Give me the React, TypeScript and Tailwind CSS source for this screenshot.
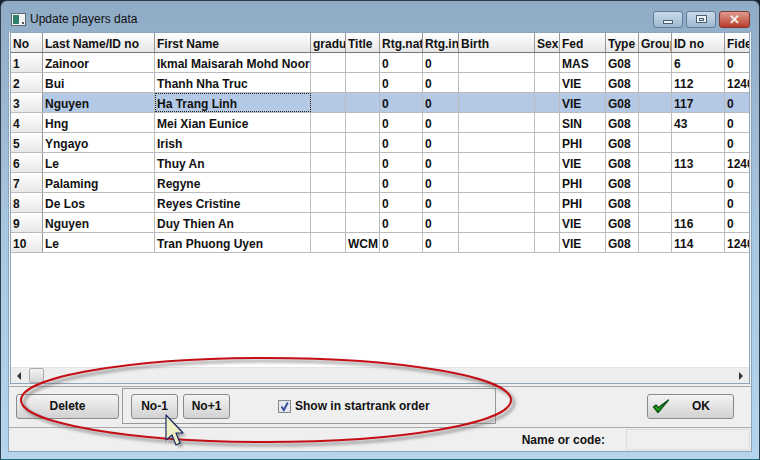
const columns = [
  { label: "No", width: "w-[32px]" },
  { label: "Last Name/ID no", width: "w-[112px]" },
  { label: "First Name", width: "w-[156px]" },
  { label: "gradu", width: "w-[35px]" },
  { label: "Title", width: "w-[34px]" },
  { label: "Rtg.nat", width: "w-[43px]" },
  { label: "Rtg.in", width: "w-[36px]" },
  { label: "Birth", width: "w-[76px]" },
  { label: "Sex", width: "w-[25px]" },
  { label: "Fed", width: "w-[46px]" },
  { label: "Type", width: "w-[33px]" },
  { label: "Group", width: "w-[33px]" },
  { label: "ID no", width: "w-[53px]" },
  { label: "Fide", width: "w-[27px]" },
];

const rows = [
  ["1", "Zainoor", "Ikmal Maisarah Mohd Noor", "", "", "0", "0", "", "", "MAS", "G08", "", "6", "0"],
  ["2", "Bui", "Thanh Nha Truc", "", "", "0", "0", "", "", "VIE", "G08", "", "112", "12401"],
  ["3", "Nguyen", "Ha Trang Linh", "", "", "0", "0", "", "", "VIE", "G08", "", "117", "0"],
  ["4", "Hng", "Mei Xian Eunice", "", "", "0", "0", "", "", "SIN", "G08", "", "43", "0"],
  ["5", "Yngayo", "Irish", "", "", "0", "0", "", "", "PHI", "G08", "", "", "0"],
  ["6", "Le", "Thuy An", "", "", "0", "0", "", "", "VIE", "G08", "", "113", "12401"],
  ["7", "Palaming", "Regyne", "", "", "0", "0", "", "", "PHI", "G08", "", "", "0"],
  ["8", "De Los", "Reyes Cristine", "", "", "0", "0", "", "", "PHI", "G08", "", "", "0"],
  ["9", "Nguyen", "Duy Thien An", "", "", "0", "0", "", "", "VIE", "G08", "", "116", "0"],
  ["10", "Le", "Tran Phuong Uyen", "", "WCM", "0", "0", "", "", "VIE", "G08", "", "114", "12401"],
];

const btn =
  "h-[25px] rounded-[3px] border border-[#8a8a8a] bg-gradient-to-b from-[#f4f4f4] to-[#d2d2d2] text-[12px] font-bold text-[#111]";

const WinButton = ({ width, red, children }: { width: string; red?: boolean; children: React.ReactNode }) => (
  <div
    className={`${width} h-[17px] rounded-[3px] border flex items-center justify-center ${
      red
        ? "border-[#7d3a32] bg-gradient-to-b from-[#dd9a8c] to-[#b8392b]"
        : "border-[#5f7d98] bg-gradient-to-b from-[#c9dbea] to-[#9db9d1]"
    }`}
  >
    {children}
  </div>
);

const App = () => {
  return (
    <div className="relative w-[760px] h-[460px] overflow-hidden bg-[#15202a] font-['Liberation_Sans',sans-serif]">
      <div className="w-full h-full flex flex-col rounded-t-[7px] border-t border-l border-r border-b border-[#2e3e4c] border-b-[#1d6f80] bg-gradient-to-b from-[#8fabc6] via-[#a9c6e0] to-[#b6d4ec] px-[7px]">
        {/* Title bar */}
        <div className="h-[31px] shrink-0 flex items-center justify-between">
          <div className="flex items-center gap-[4px] pl-[3px] pt-[5px]">
            <svg width="15" height="13" viewBox="0 0 15 13">
              <rect x="0.5" y="0.5" width="14" height="12" fill="#f4f4f4" stroke="#5a6a70" />
              <rect x="2" y="2" width="6" height="9" fill="#2f7f6a" />
              <rect x="11" y="9" width="2" height="2" fill="#555" />
            </svg>
            <span className="text-[12px] text-[#111]">Update players data</span>
          </div>
          <div className="flex gap-[3px] pr-[2px] pt-[5px]">
            <WinButton width="w-[30px]">
              <div className="w-[10px] h-[4px] mt-[5px] bg-[#eef3f7] border border-[#4d6070]" />
            </WinButton>
            <WinButton width="w-[30px]">
              <div className="w-[11px] h-[8px] bg-[#eef3f7] border border-[#4d6070] flex items-center justify-center">
                <div className="w-[5px] h-[3px] bg-[#c9dbea] border border-[#4d6070]" />
              </div>
            </WinButton>
            <WinButton width="w-[31px]" red>
              <span className="text-[13px] leading-none font-bold text-[#f5f0ee]">✕</span>
            </WinButton>
          </div>
        </div>

        {/* Client area */}
        <div className="h-[420px] shrink-0 flex flex-col bg-[#efefef] border-l border-r border-b border-[#8ea3b5]">
          <div className="mx-px h-[352px] shrink-0 flex flex-col border border-[#8da6bd] bg-white overflow-hidden">
            {/* Header */}
            <div className="flex h-[20px] shrink-0 border-b border-[#777]">
              {columns.map((c) => (
                <div
                  key={c.label}
                  className={`${c.width} shrink-0 overflow-hidden whitespace-nowrap border-r border-[#999] bg-gradient-to-b from-white to-[#e6e6e6] pl-[2px] text-[12px] font-bold leading-[23px] text-[#111]`}
                >
                  {c.label}
                </div>
              ))}
            </div>
            {/* Rows */}
            {rows.map((row, r) => (
              <div key={row[0]} className={`flex h-[20px] shrink-0 border-b border-[#bbb] ${r === 2 ? "bg-[#b4c9e6]" : ""}`}>
                {row.map((cell, i) => (
                  <div
                    key={i}
                    className={`${columns[i].width} shrink-0 overflow-hidden whitespace-nowrap border-r border-[#bbb] pl-[2px] text-[12px] font-bold leading-[23px] text-[#111] ${
                      i === 0 ? "bg-gradient-to-b from-[#ffffff] to-[#e8e8e8] border-r-[#999]" : ""
                    } ${r === 2 && i === 2 ? "outline-1 -outline-offset-1 outline-dotted outline-[#222]" : ""}`}
                  >
                    {cell}
                  </div>
                ))}
              </div>
            ))}
            <div className="flex-1" />
            {/* Horizontal scrollbar */}
            <div className="h-[16px] shrink-0 bg-[#eeeeee] border-t border-[#e4e4e4] flex items-center justify-between pl-[6px] pr-[6px]">
              <div className="flex items-center gap-[8px]">
                <div className="w-0 h-0 border-y-[4px] border-y-transparent border-r-[4px] border-r-[#333]" />
                <div className="w-[15px] h-[15px] rounded-[2px] border border-[#aaa] bg-gradient-to-b from-[#f2f2f2] to-[#d6d6d6]" />
              </div>
              <div className="w-0 h-0 border-y-[4px] border-y-transparent border-l-[4px] border-l-[#333]" />
            </div>
          </div>

          {/* Buttons */}
          <div className="h-[42px] mt-[2px] shrink-0 flex items-center border-t border-b border-[#aaa] pl-[7px] pr-[17px] pb-[2px]">
            <button className={`${btn} w-[103px]`}>Delete</button>
            <div className="ml-[3px] w-[374px] h-[36px] flex items-center border border-[#999] pl-[8px]">
              <button className={`${btn} w-[47px]`}>No-1</button>
              <button className={`${btn} w-[47px] ml-[5px]`}>No+1</button>
              <div className="ml-[48px] w-[13px] h-[13px] border border-[#888] bg-[#e4e8f2] flex items-center justify-center">
                <svg width="11" height="11" viewBox="0 0 11 11">
                  <path d="M2.5 5.5 L4.8 9 L8.8 1.5" fill="none" stroke="#3d4f96" strokeWidth="2" />
                </svg>
              </div>
              <span className="ml-[4px] text-[12px] font-bold text-[#111]">Show in startrank order</span>
            </div>
            <button className={`${btn} ml-auto w-[87px] flex items-center pl-[4px]`}>
              <svg width="18" height="16" viewBox="0 0 18 16">
                <path d="M1.5 9 L6 14.5 L16.5 2 L6.5 9.5 L4 7 Z" fill="#17a317" stroke="#0a4a12" strokeWidth="1.2" strokeLinejoin="round" />
              </svg>
              <span className="ml-[22px]">OK</span>
            </button>
          </div>

          {/* Status bar */}
          <div className="flex-1 flex items-center justify-end pr-[1px]">
            <span className="text-[12px] font-bold text-[#111] mr-[21px]">Name or code:</span>
            <div className="w-[124px] h-[21px] border border-[#dcdcdc]" />
          </div>
        </div>
      </div>

      {/* Red annotation ellipse and mouse cursor */}
      <svg className="absolute left-0 top-0 pointer-events-none" width="760" height="460" viewBox="0 0 760 460">
        <defs>
          <filter id="soft" x="-10%" y="-30%" width="120%" height="160%">
            <feGaussianBlur stdDeviation="1.5" />
          </filter>
        </defs>
        <ellipse cx="269" cy="403" rx="245" ry="42" fill="none" stroke="#666" strokeOpacity="0.55" strokeWidth="3" filter="url(#soft)" />
        <ellipse cx="266" cy="400" rx="245" ry="42" fill="none" stroke="#c40f16" strokeWidth="2" />
        <path d="M168 417 L168 441 L173 436 L177 446 L181 444 L177 434 L184 434 Z" fill="#555" fillOpacity="0.5" filter="url(#soft)" transform="translate(2 2)" />
        <path d="M166 415 L166 440 L172 435 L176 445 L180 443 L176 433 L183 433 Z" fill="#efefc4" stroke="#1d2a66" strokeWidth="1.2" strokeLinejoin="round" />
      </svg>
    </div>
  );
};

export default App;
